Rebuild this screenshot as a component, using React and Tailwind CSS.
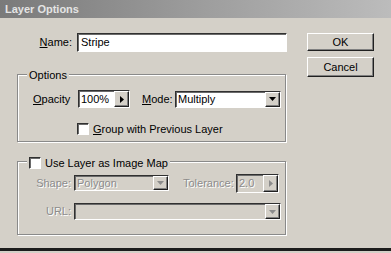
import React from 'react';

const font = "font-['Tahoma','Liberation_Sans','DejaVu_Sans',sans-serif] text-[11px]";
const sunken = 'border border-t-[#303030] border-l-[#303030] border-b-white border-r-white shadow-[inset_1px_1px_0_#6a6a6a]';
const raised = 'border border-t-white border-l-white border-b-[#202020] border-r-[#202020] shadow-[inset_-1px_-1px_0_#808080]';
const etched = 'border border-[#8a8a8a] shadow-[inset_1px_1px_0_#fff,1px_1px_0_#fff]';
const emboss = 'text-[#8c8c8c] [text-shadow:1px_1px_0_#fff]';

const Arrow = ({ dir = 'down', disabled }) => (
  <div className={`${raised} w-[15px] h-full flex items-center justify-center bg-[#d4d0c8]`}>
    {dir === 'down' ? (
      <svg width="7" height="4" viewBox="0 0 7 4">
        <path d="M0 0h7L3.5 4z" fill={disabled ? '#8c8c8c' : '#000'} />
      </svg>
    ) : (
      <svg width="4" height="7" viewBox="0 0 4 7">
        <path d="M0 0v7l4-3.5z" fill={disabled ? '#8c8c8c' : '#000'} />
      </svg>
    )}
  </div>
);

const Check = () => <div className={`${sunken} w-[12px] h-[12px] bg-white shrink-0`} />;

export default function App() {
  return (
    <div className={`w-[391px] h-[253px] bg-[#d4d0c8] flex flex-col overflow-hidden ${font} text-black`}>
      {/* Title bar */}
      <div className="h-[18px] bg-gradient-to-r from-[#7a7a7a] via-[#9c9c9c] to-[#bcbcbc] flex items-center pl-[5px]">
        <span className="font-bold text-[#e4e4e4] leading-none">Layer Options</span>
      </div>

      <div className="flex flex-1 pt-[15px]">
        {/* Left column */}
        <div className="w-[287px] shrink-0 pl-[17px] flex flex-col">
          {/* Name */}
          <div className="flex items-center h-[19px]">
            <span className="w-[60px] text-right pr-[5px]">
              <u>N</u>ame:
            </span>
            <div className={`${sunken} w-[210px] h-[19px] bg-white flex items-center pl-[3px]`}>Stripe</div>
          </div>

          {/* Options group */}
          <div className={`${etched} relative mt-[22px] h-[68px] w-[269px]`}>
            <span className="absolute -top-[8px] left-[9px] bg-[#d4d0c8] px-[2px]">Options</span>
            <div className="flex items-center mt-[15px] h-[18px]">
              <span className="w-[60px] pl-[15px]">
                <u>O</u>pacity
              </span>
              <div className={`${sunken} w-[52px] h-[18px] bg-white flex items-center`}>
                <span className="flex-1 pl-[2px]">100%</span>
                <Arrow dir="right" />
              </div>
              <span className="ml-[12px] w-[33px]">
                <u>M</u>ode:
              </span>
              <div className={`${sunken} w-[106px] h-[17px] bg-white flex items-center`}>
                <span className="flex-1 pl-[2px]">Multiply</span>
                <Arrow />
              </div>
            </div>
            <div className="flex items-center mt-[13px] ml-[59px] gap-[4px]">
              <Check />
              <span>
                <u>G</u>roup with Previous Layer
              </span>
            </div>
          </div>

          {/* Image map group */}
          <div className={`${etched} relative mt-[19px] h-[74px] w-[269px]`}>
            <div className="absolute -top-[7px] left-[9px] bg-[#d4d0c8] px-[2px] flex items-center gap-[4px]">
              <Check />
              <span>Use Layer as Image Map</span>
            </div>
            <div className="flex items-center mt-[13px] h-[16px]">
              <span className={`w-[56px] text-right pr-[3px] ${emboss}`}>Shape:</span>
              <div className={`${sunken} w-[95px] h-[16px] flex items-center`}>
                <span className={`flex-1 pl-[2px] ${emboss}`}>Polygon</span>
                <Arrow disabled />
              </div>
              <span className={`ml-[14px] w-[53px] ${emboss}`}>Tolerance:</span>
              <div className={`${sunken} w-[43px] h-[19px] flex items-center`}>
                <span className={`flex-1 pl-[2px] ${emboss}`}>2.0</span>
                <Arrow dir="right" disabled />
              </div>
            </div>
            <div className="flex items-center mt-[12px] h-[17px]">
              <span className={`w-[56px] text-right pr-[3px] ${emboss}`}>URL:</span>
              <div className={`${sunken} w-[207px] h-[17px] flex items-center justify-end`}>
                <Arrow disabled />
              </div>
            </div>
          </div>
        </div>

        {/* Buttons */}
        <div className="ml-[20px] flex flex-col gap-[6px]">
          <div className={`${raised} w-[67px] h-[18px] flex items-center justify-center`}>OK</div>
          <div className={`${raised} w-[67px] h-[20px] flex items-center justify-center`}>Cancel</div>
        </div>
      </div>

      <div className="h-[3px] bg-[#1c1c1c] mb-[2px]" />
    </div>
  );
}
